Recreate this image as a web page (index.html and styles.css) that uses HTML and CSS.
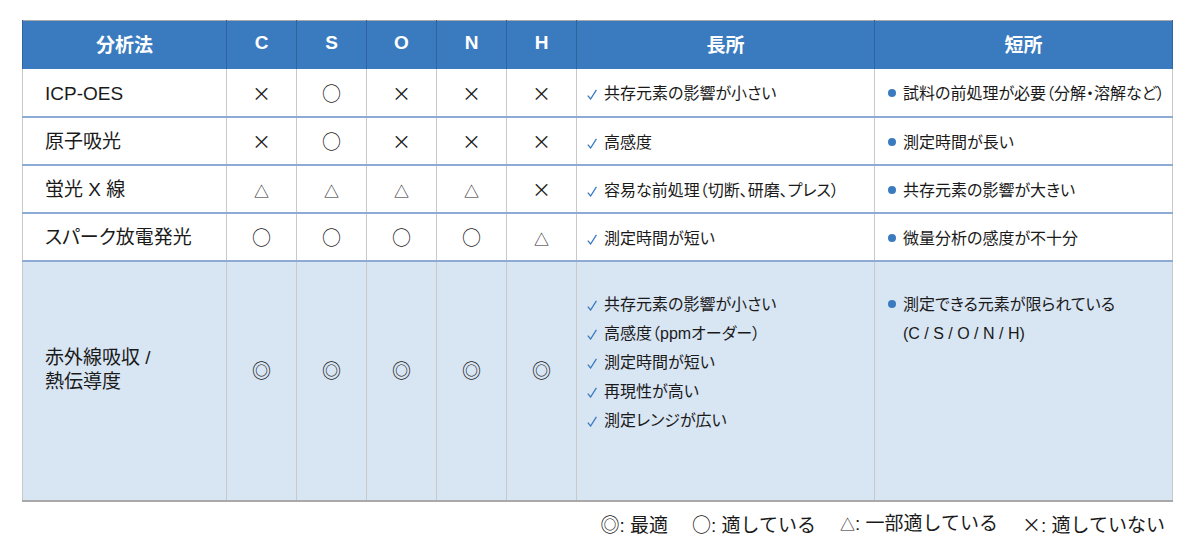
FILE: index.html
```html
<!DOCTYPE html>
<html lang="ja">
<head>
<meta charset="utf-8">
<title>分析法の比較</title>
<link rel="stylesheet" href="styles.css">
</head>
<body>
<div class="page">
  <table class="cmp">
    <colgroup>
      <col class="c-method">
      <col class="c-el"><col class="c-el"><col class="c-el"><col class="c-el"><col class="c-el">
      <col class="c-pro">
      <col class="c-con">
    </colgroup>
    <thead>
      <tr>
        <th>分析法</th><th>C</th><th>S</th><th>O</th><th>N</th><th>H</th><th>長所</th><th>短所</th>
      </tr>
    </thead>
    <tbody>
      <tr>
        <td class="method">ICP-OES</td>
        <td class="sym">×</td><td class="sym">○</td><td class="sym">×</td><td class="sym">×</td><td class="sym">×</td>
        <td class="pro"><span class="chk"><svg viewBox="0 0 10 11" width="10" height="11"><path d="M0.8 6.6 L3.6 10 L9.4 0.8" fill="none" stroke="#3a7bbf" stroke-width="1.3"/></svg></span>共存元素の影響が小さい</td>
        <td class="con"><span class="dot"></span>試料の前処理が必要（分解・溶解など）</td>
      </tr>
      <tr>
        <td class="method">原子吸光</td>
        <td class="sym">×</td><td class="sym">○</td><td class="sym">×</td><td class="sym">×</td><td class="sym">×</td>
        <td class="pro"><span class="chk"><svg viewBox="0 0 10 11" width="10" height="11"><path d="M0.8 6.6 L3.6 10 L9.4 0.8" fill="none" stroke="#3a7bbf" stroke-width="1.3"/></svg></span>高感度</td>
        <td class="con"><span class="dot"></span>測定時間が長い</td>
      </tr>
      <tr>
        <td class="method">蛍光 X 線</td>
        <td class="sym"><span class="tri">△</span></td><td class="sym"><span class="tri">△</span></td><td class="sym"><span class="tri">△</span></td><td class="sym"><span class="tri">△</span></td><td class="sym">×</td>
        <td class="pro"><span class="chk"><svg viewBox="0 0 10 11" width="10" height="11"><path d="M0.8 6.6 L3.6 10 L9.4 0.8" fill="none" stroke="#3a7bbf" stroke-width="1.3"/></svg></span>容易な前処理（切断、研磨、プレス）</td>
        <td class="con"><span class="dot"></span>共存元素の影響が大きい</td>
      </tr>
      <tr>
        <td class="method">スパーク放電発光</td>
        <td class="sym">○</td><td class="sym">○</td><td class="sym">○</td><td class="sym">○</td><td class="sym"><span class="tri">△</span></td>
        <td class="pro"><span class="chk"><svg viewBox="0 0 10 11" width="10" height="11"><path d="M0.8 6.6 L3.6 10 L9.4 0.8" fill="none" stroke="#3a7bbf" stroke-width="1.3"/></svg></span>測定時間が短い</td>
        <td class="con"><span class="dot"></span>微量分析の感度が不十分</td>
      </tr>
      <tr class="best">
        <td class="method">赤外線吸収 /<br>熱伝導度</td>
        <td class="sym">◎</td><td class="sym">◎</td><td class="sym">◎</td><td class="sym">◎</td><td class="sym">◎</td>
        <td class="pro list">
          <div class="item"><span class="chk"><svg viewBox="0 0 10 11" width="10" height="11"><path d="M0.8 6.6 L3.6 10 L9.4 0.8" fill="none" stroke="#3a7bbf" stroke-width="1.3"/></svg></span>共存元素の影響が小さい</div>
          <div class="item"><span class="chk"><svg viewBox="0 0 10 11" width="10" height="11"><path d="M0.8 6.6 L3.6 10 L9.4 0.8" fill="none" stroke="#3a7bbf" stroke-width="1.3"/></svg></span>高感度（ppmオーダー）</div>
          <div class="item"><span class="chk"><svg viewBox="0 0 10 11" width="10" height="11"><path d="M0.8 6.6 L3.6 10 L9.4 0.8" fill="none" stroke="#3a7bbf" stroke-width="1.3"/></svg></span>測定時間が短い</div>
          <div class="item"><span class="chk"><svg viewBox="0 0 10 11" width="10" height="11"><path d="M0.8 6.6 L3.6 10 L9.4 0.8" fill="none" stroke="#3a7bbf" stroke-width="1.3"/></svg></span>再現性が高い</div>
          <div class="item"><span class="chk"><svg viewBox="0 0 10 11" width="10" height="11"><path d="M0.8 6.6 L3.6 10 L9.4 0.8" fill="none" stroke="#3a7bbf" stroke-width="1.3"/></svg></span>測定レンジが広い</div>
        </td>
        <td class="con list">
          <div class="item"><span class="dot"></span>測定できる元素が限られている</div>
          <div class="item indent">(C / S / O / N / H)</div>
        </td>
      </tr>
    </tbody>
  </table>
  <div class="legend">
    <span class="lg"><span class="lsym">◎</span>: 最適</span>
    <span class="lg"><span class="lsym">○</span>: 適している</span>
    <span class="lg"><span class="lsym ltri">△</span>: 一部適している</span>
    <span class="lg"><span class="lsym">×</span>: 適していない</span>
  </div>
</div>
</body>
</html>
```

FILE: styles.css
```css
html, body {
  margin: 0;
  padding: 0;
  background: #ffffff;
}

body {
  font-family: "Liberation Sans", "Noto Sans CJK JP", sans-serif;
  color: #1a1a1a;
}

.page {
  padding: 20px 28px 0 22px;
}

.cmp {
  width: 1150px;
  border-collapse: collapse;
  table-layout: fixed;
  border: 1px solid #a9a9a9;
}

.c-method { width: 204px; }
.c-el { width: 70px; }
.c-pro { width: 298px; }
.c-con { width: 298px; }

.cmp thead tr {
  height: 48px;
}

.cmp th {
  background: #3a7bbf;
  color: #ffffff;
  font-family: "Liberation Sans", "Noto Sans CJK JP", sans-serif;
  font-weight: bold;
  font-size: 19px;
  padding: 0 0 3px 0;
  text-align: center;
  border-left: 1px solid #2d65a2;
  border-right: 1px solid #2d65a2;
}

.cmp tbody tr {
  height: 48px;
}

.cmp td {
  padding: 0;
  border-left: 1px solid #c9c9c9;
  border-right: 1px solid #c9c9c9;
  border-bottom: 2px solid #8eabd5;
  vertical-align: middle;
  font-feature-settings: "palt";
}

.method {
  font-size: 19px;
  padding-left: 22px !important;
  padding-top: 3px !important;
  line-height: 24px;
}

.sym {
  text-align: center;
  font-family: "Noto Sans CJK JP", sans-serif;
  font-size: 19px;
  font-feature-settings: normal !important;
}

.tri {
  font-size: 15px;
}

.pro, .con {
  font-family: "Liberation Sans", "Noto Sans CJK JP", sans-serif;
  font-size: 16px;
  white-space: nowrap;
}

.pro {
  padding-left: 10px !important;
}

.con {
  padding-left: 13px !important;
}

.chk {
  display: inline-block;
  width: 10px;
  height: 11px;
  margin-right: 7px;
  vertical-align: -1px;
}

.chk svg {
  display: block;
}

.dot {
  display: inline-block;
  width: 8px;
  height: 8px;
  border-radius: 50%;
  background: #3a7bbf;
  margin-right: 7px;
  vertical-align: 2px;
}

.cmp tbody tr.best {
  height: 240px;
}

.best td {
  background: #d8e5f3;
  border-bottom: 2px solid #a9a9a9;
  padding-bottom: 22px;
}

.best td.method {
  padding-top: 0 !important;
}

.best td.list {
  vertical-align: top;
  padding-top: 28px;
  padding-bottom: 0;
}

.item {
  line-height: 29px;
  height: 29px;
}

.indent {
  padding-left: 15px;
}

.legend {
  display: flex;
  justify-content: flex-end;
  gap: 24px;
  margin-top: 8px;
  padding-right: 7px;
  font-family: "Liberation Sans", "Noto Sans CJK JP", sans-serif;
  font-size: 19px;
  line-height: 28px;
  color: #1a1a1a;
}

.lsym {
  font-family: "Noto Sans CJK JP", sans-serif;
}

.ltri {
  font-size: 15px;
}
```
